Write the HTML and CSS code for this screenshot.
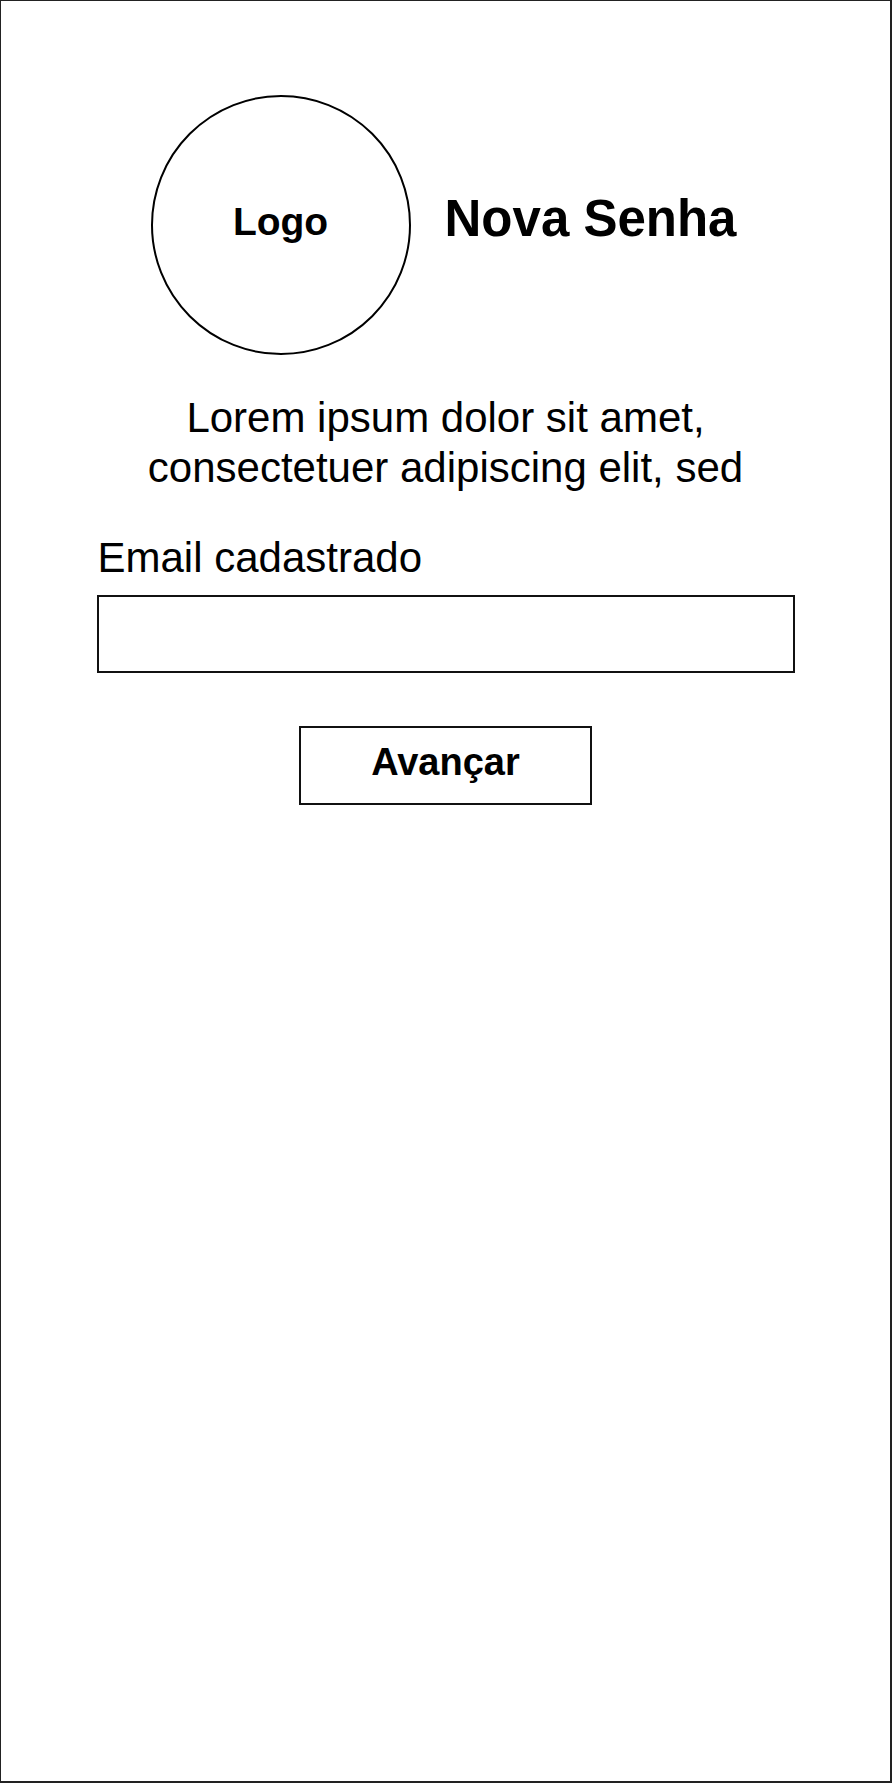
FILE: index.html
```html
<!DOCTYPE html>
<html lang="pt-BR">
<head>
<meta charset="utf-8">
<title>Nova Senha</title>
<link rel="stylesheet" href="styles.css">
</head>
<body>
<div class="frame">
  <header class="header">
    <div class="logo"><span class="logo-text">Logo</span></div>
    <h1 class="title">Nova Senha</h1>
  </header>
  <p class="intro">Lorem ipsum dolor sit amet, consectetuer adipiscing elit, sed</p>
  <form class="form">
    <label class="label" for="email">Email cadastrado</label>
    <input class="input" id="email" type="email">
    <button class="button" type="button">Avançar</button>
  </form>
</div>
</body>
</html>
```

FILE: styles.css
```css
* { box-sizing: border-box; }

html, body {
  margin: 0;
  padding: 0;
  background: #fff;
}

body {
  font-family: "Liberation Sans", Arial, sans-serif;
  color: #000;
}

.frame {
  width: 892px;
  height: 1783px;
  border-style: solid;
  border-color: #222;
  border-width: 1px 2px 2px 1px;
  padding-top: 94px;
  display: flex;
  flex-direction: column;
  align-items: center;
}

.header {
  display: flex;
  align-items: center;
  gap: 34px;
  margin-right: 4px;
}

.logo {
  width: 260px;
  height: 260px;
  border: 2px solid #000;
  border-radius: 50%;
  display: flex;
  align-items: center;
  justify-content: center;
  padding-bottom: 8px;
}

.logo-text {
  font-weight: bold;
  font-size: 39px;
  line-height: 1;
}

.title {
  margin: 0 0 12px;
  font-size: 51px;
  font-weight: bold;
  line-height: 1.15;
}

.intro {
  margin: 38px 0 0;
  width: 660px;
  text-align: center;
  font-size: 42px;
  line-height: 50px;
}

.form {
  width: 698px;
  margin-top: 40px;
  display: flex;
  flex-direction: column;
  align-items: stretch;
}

.label {
  font-size: 42px;
  line-height: 50px;
  padding-left: 1px;
}

.input {
  margin-top: 12px;
  height: 78px;
  border: 2px solid #111;
  background: #fff;
  font: inherit;
  font-size: 30px;
  padding: 0 12px;
  outline: none;
}

.button {
  align-self: center;
  margin-top: 53px;
  width: 293px;
  height: 79px;
  border: 2px solid #111;
  background: #fff;
  font-family: "Liberation Sans", Arial, sans-serif;
  font-weight: bold;
  font-size: 38px;
  color: #000;
  padding: 0 0 6px;
  cursor: pointer;
}
```
